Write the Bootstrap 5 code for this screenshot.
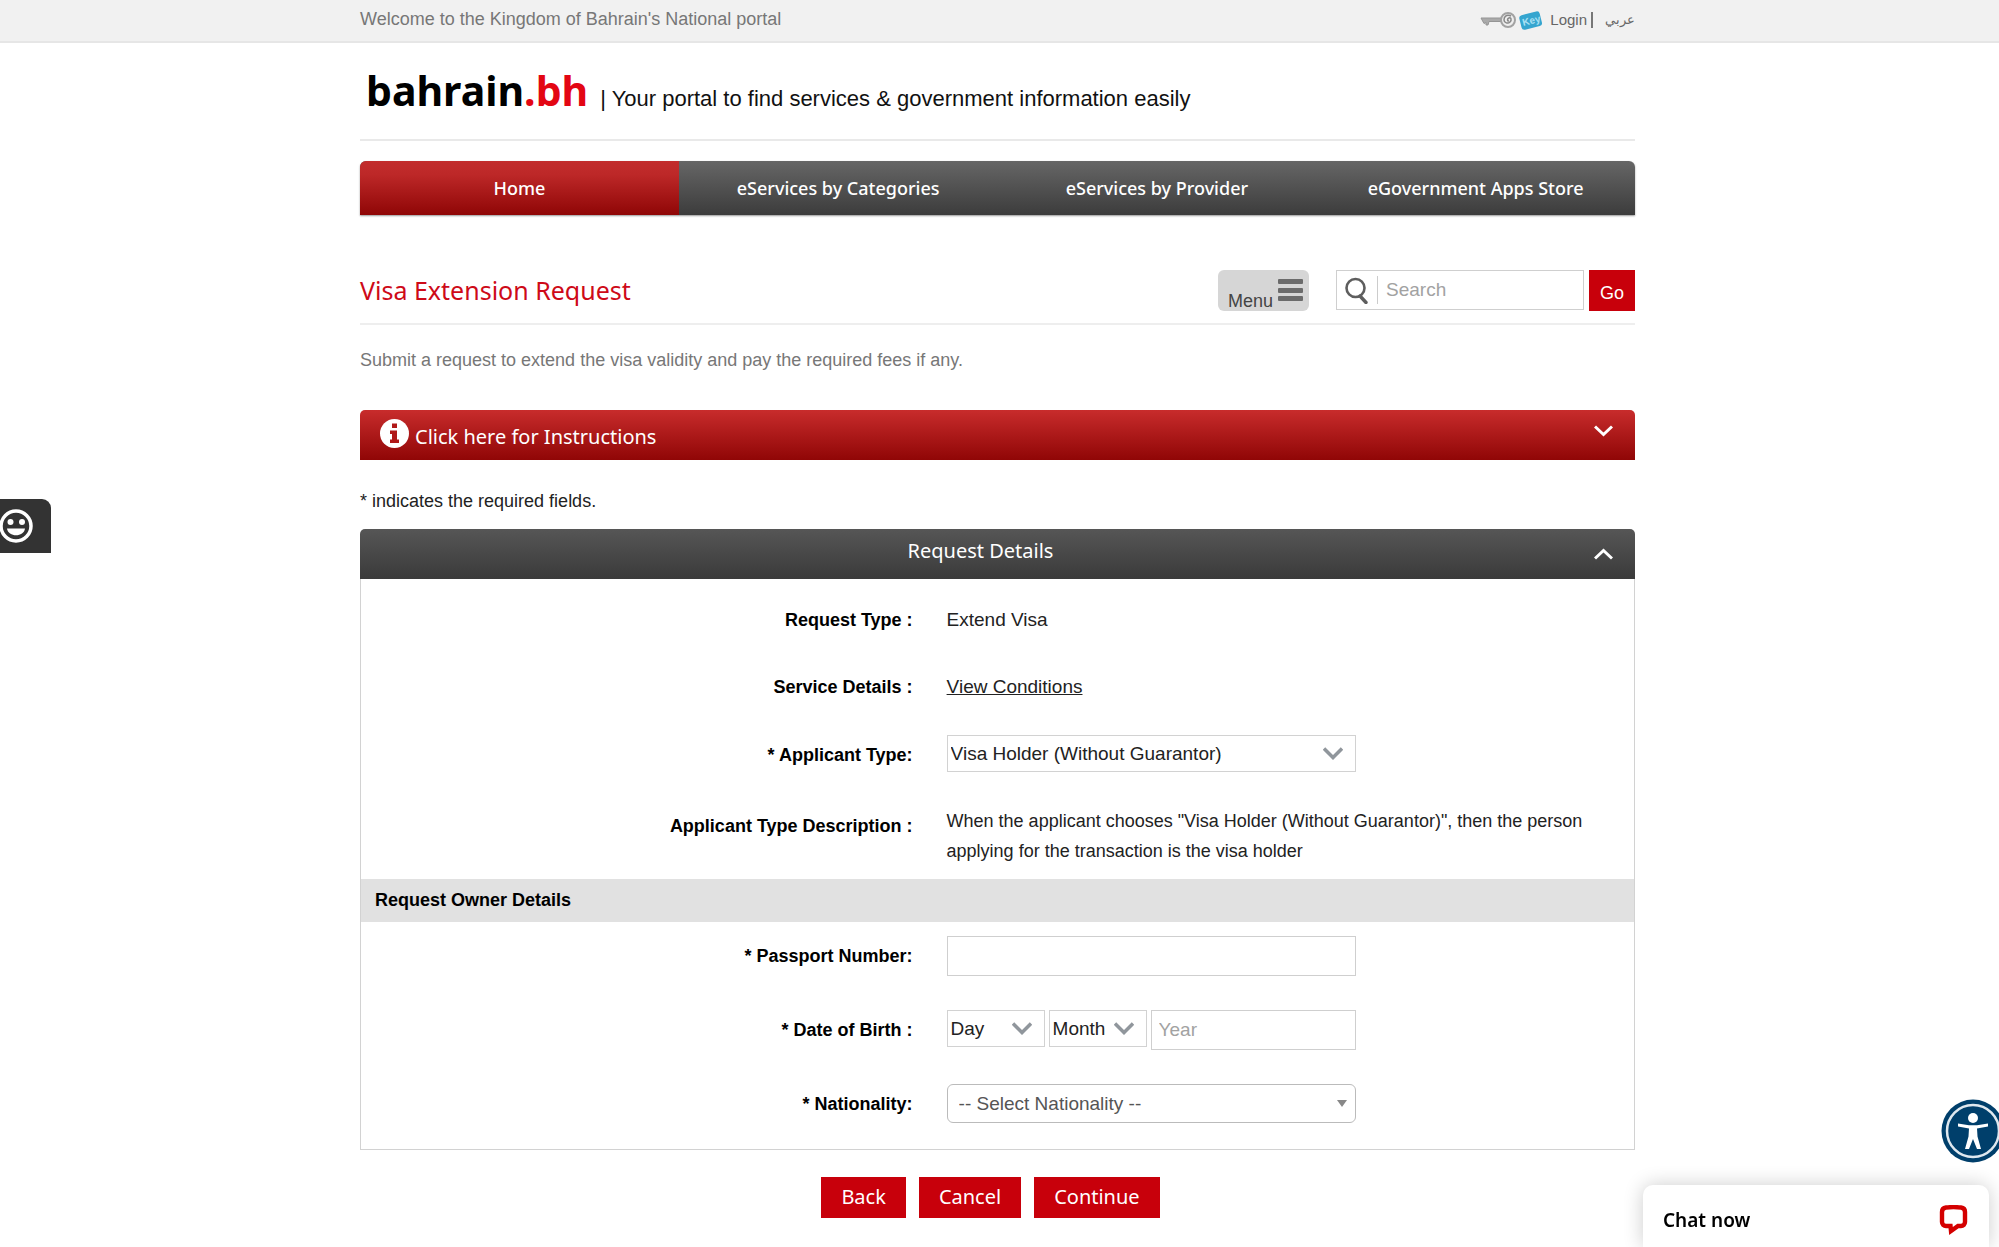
<!DOCTYPE html>
<html lang="en">
<head>
<meta charset="utf-8">
<meta name="viewport" content="width=device-width, initial-scale=1">
<title>Visa Extension Request - bahrain.bh</title>
<link href="https://cdn.jsdelivr.net/npm/bootstrap@5.3.0/dist/css/bootstrap.min.css" rel="stylesheet">
<style>
  body { font-family: "Liberation Sans", Arial, sans-serif; font-size: 18px; line-height: 30px; color: #222; background: #fff; overflow-x: hidden; }
  a { color: inherit; }
  .page-wrap { width: 100%; max-width: 1279px; margin: 0 auto; padding-right: 4px; }
  .head-font { font-family: "Noto Sans", "Open Sans", sans-serif; }
  .topbar { background: #f1f1f1; border-bottom: 2px solid #e6e6e6; height: 43px; color: #777; }
  .topbar .page-wrap { height: 38px; }
  .topbar-links { font-size: 15px; color: #666; padding-top: 2px; }
  .topbar-links [lang="ar"] { font-size: 13px; }
  .bar-sep { width: 2px; height: 16px; background: #777; margin: 0 12px 0 4px; }
  .masthead { height: 98px; padding-left: 6px; padding-top: 20px; border-bottom: 2px solid #e9e9e9; }
  .brand { font-size: 41px; font-weight: 700; line-height: 54px; color: #000; }
  .brand span { color: #e30613; }
  .tagline { font-size: 22px; color: #111; margin-left: 12px; }
  .main-nav { margin-top: 20px; height: 54px; border-radius: 6px 6px 0 0; overflow: hidden; background: linear-gradient(#666, #3c3c3c); box-shadow: 0 1px 2px #999; }
  .main-nav .nav-link { color: #fff; font-size: 18px; font-weight: 500; line-height: 54px; padding: 0; }
  .main-nav .nav-link.active { background: linear-gradient(#c22c2c, #bd2828 25%, #8f0606); }
  .title-row { margin-top: 55px; height: 55px; border-bottom: 2px solid #eee; }
  .title-row h1 { font-size: 25px; line-height: 40px; color: #ce0a18; font-weight: 400; }
  .menu-btn { width: 91px; height: 41px; border: 0; border-radius: 6px; background: #d6d6d6; color: #444; padding: 0 6px 0 10px; line-height: 20px; margin-right: 27px; }
  .menu-btn .menu-word { padding-top: 20px; }
  .search-box { width: 248px; height: 40px; border: 1px solid #cfcfcf; margin-right: 5px; padding-left: 8px; }
  .search-sep { width: 1px; height: 28px; background: #ccc; margin: 0 8px 0 9px; }
  .search-box input { border: 0; outline: 0; width: 100%; min-width: 0; font-size: 19px; padding: 0; background: transparent; }
  input::placeholder { color: #a2a2a2; opacity: 1; }
  .red-btn { background: #c8000b; color: #fff; border: 0; border-radius: 0; height: 41px; }
  .go-btn { width: 46px; padding: 5px 0 0; font-size: 18px; }
  .intro { color: #777; margin: 20px 0 35px; line-height: 30px; }
  .instructions { width: 100%; height: 50px; border: 0; border-radius: 5px 5px 0 0; background: linear-gradient(#c82c2c, #900606); color: #fff; padding: 0 22px 0 20px; font-size: 20px; margin-bottom: 26px; }
  .instructions .label-text { padding-top: 4px; margin-left: 6px; }
  .instructions .chev { margin-bottom: 9px; margin-left: auto; }
  .required-note { margin-bottom: 13px; }
  .panel-head { width: 100%; height: 50px; border: 0; border-radius: 5px 5px 0 0; background: linear-gradient(#565656, #3a3a3a); color: #fff; font-size: 20px; padding: 0 22px 0 0; }
  .panel-head .head-text { padding: 0 0 7px 7px; }
  .panel-body { border: 1px solid #d2d2d2; border-top: 0; padding-top: 26px; padding-bottom: 26px; margin-bottom: 27px; }
  .form-line { display: flex; align-items: flex-start; color: #222; }
  .form-line > .lab { width: 46%; padding-right: 34px; text-align: right; font-weight: 700; color: #000; }
  .form-line > .val { flex: 1; min-width: 0; }
  .field-line > .lab { padding-top: 5px; }
  .line-a { margin-bottom: 37px; }
  .line-b { margin-bottom: 33px; }
  .line-c { margin-bottom: 34px; }
  .line-d { margin-bottom: 13px; }
  .mid-text { font-size: 19px; }
  .strip { background: #e1e1e1; height: 43px; line-height: 42px; padding-left: 14px; font-size: 18px; font-weight: 700; color: #000; margin: 0 0 14px; }
  .plain-select { appearance: none; border: 1px solid #d2d2d2; border-radius: 0; height: 37px; font-size: 19px; line-height: 30px; padding: 0 0 0 3px; color: #222; background: transparent; width: 100%; }
  .pick { position: relative; }
  .pick svg { position: absolute; right: 13px; top: 12px; pointer-events: none; }
  .w-field { width: 409px; max-width: 100%; }
  .w-part { width: 98px; }
  .text-field { border: 1px solid #cfcfcf; height: 40px; font-size: 19px; padding: 0 7px; width: 100%; min-width: 0; outline: 0; color: #222; }
  .round-select { border: 1px solid #bbb; border-radius: 6px; height: 39px; padding-left: 11px; color: #555; }
  .pick .caret { right: 9px; top: 16px; }
  .actions { gap: 13px; padding-right: 14px; }
  .action-btn { font-size: 20px; padding: 0 20px 1px; }
  .feedback { position: fixed; left: 0; top: 499px; width: 51px; height: 54px; background: #333; border: 0; border-radius: 0 9px 0 0; padding: 0; text-align: left; }
  .access { position: fixed; right: -6px; bottom: 84px; width: 64px; height: 64px; border: 0; padding: 0; background: none; }
  .chat { position: fixed; right: 10px; bottom: 0; width: 346px; height: 62px; border: 0; border-radius: 10px 10px 0 0; background: #fff; box-shadow: 0 0 20px rgba(0,0,0,.2); padding: 7px 21px 0 20px; font-size: 19px; font-weight: 600; color: #000; }
</style>
</head>
<body>
<div class="topbar">
  <div class="page-wrap d-flex justify-content-between align-items-center">
    <span>Welcome to the Kingdom of Bahrain's National portal</span>
    <div class="topbar-links d-flex align-items-center">
      <svg class="me-2" width="62" height="26" viewBox="0 0 62 26" aria-hidden="true">
        <path d="M1 11H21V14.500H9L8 18H6V15.500L4 16.500Z" fill="#aaa" stroke="#959595"/>
        <circle cx="28" cy="13" r="7" fill="#eee" stroke="#a2a2a2" stroke-width="2"/>
        <path d="M31 9c-5-2-7 1-7 4s4 4 6 2 1-5-1-4-2 3 0 3" fill="none" stroke="#888" stroke-width="1.500"/>
        <g transform="rotate(-14 51 13)"><rect x="40" y="6" width="21" height="15" rx="3" fill="#35a5cf"/>
        <text x="42" y="17" font-family="Liberation Sans, sans-serif" font-size="10" font-weight="700" fill="#a8e0f3">Key</text></g>
      </svg>
      <a href="#" class="text-decoration-none">Login</a>
      <span class="bar-sep"></span>
      <a href="#" class="text-decoration-none" lang="ar">عربي</a>
    </div>
  </div>
</div>

<div class="page-wrap">
  <header class="masthead d-flex align-items-start">
    <div class="d-flex align-items-baseline">
      <a href="#" class="brand head-font text-decoration-none">bahrain<span>.bh</span></a>
      <span class="tagline">| Your portal to find services &amp; government information easily</span>
    </div>
  </header>

  <nav class="main-nav nav nav-justified head-font flex-nowrap">
    <a class="nav-item nav-link active w-25" href="#">Home</a>
    <a class="nav-item nav-link w-25" href="#">eServices by Categories</a>
    <a class="nav-item nav-link w-25" href="#">eServices by Provider</a>
    <a class="nav-item nav-link w-25" href="#">eGovernment Apps Store</a>
  </nav>

  <div class="title-row d-flex align-items-start">
    <h1 class="head-font m-0 me-auto">Visa Extension Request</h1>
    <button type="button" class="menu-btn d-flex align-items-center justify-content-between"><span class="menu-word">Menu</span>
      <svg width="25" height="23" viewBox="0 0 25 23" fill="#6b6b6b"><rect width="25" height="5" y="0" rx="1"/><rect width="25" height="5" y="9" rx="1"/><rect width="25" height="5" y="17" rx="1"/></svg>
    </button>
    <form class="d-flex">
      <div class="search-box d-flex align-items-center">
        <svg class="flex-shrink-0" width="23" height="27" viewBox="0 0 23 27" fill="none" stroke="#5e5e5e" stroke-width="2.6"><circle cx="10.5" cy="11" r="9"/><path d="M15 19l6 6.500" stroke-width="3.400" stroke-linecap="round"/></svg>
        <span class="search-sep flex-shrink-0"></span>
        <input type="search" placeholder="Search" aria-label="Search">
      </div>
      <button type="button" class="red-btn go-btn">Go</button>
    </form>
  </div>

  <p class="intro">Submit a request to extend the visa validity and pay the required fees if any.</p>

  <button type="button" class="instructions head-font d-flex align-items-center">
    <svg class="mb-1" width="29" height="29" viewBox="0 0 29 29"><circle cx="14.500" cy="14.500" r="14.500" fill="#fff"/><path d="M12 4.500h5v4.500h-5zM10 11.500h7v9h2v3.500h-9v-3.500h2v-5.500h-2z" fill="#b01818"/></svg>
    <span class="label-text">Click here for Instructions</span>
    <svg class="chev" width="19" height="12" viewBox="0 0 19 12" fill="none" stroke="#fff" stroke-width="3"><path d="M1 1.500l8.500 8 8.500-8"/></svg>
  </button>

  <p class="required-note">* indicates the required fields.</p>

  <form>
    <button type="button" class="panel-head head-font d-flex align-items-center">
      <span class="head-text flex-grow-1 text-center">Request Details</span>
      <svg width="19" height="12" viewBox="0 0 19 12" fill="none" stroke="#fff" stroke-width="3"><path d="M1 10.500l8.500-8 8.500 8"/></svg>
    </button>
    <div class="panel-body">
      <div class="form-line line-a">
        <span class="lab">Request Type :</span><span class="val mid-text">Extend Visa</span>
      </div>
      <div class="form-line line-b">
        <span class="lab">Service Details :</span><span class="val mid-text"><a href="#">View Conditions</a></span>
      </div>
      <div class="form-line field-line line-c">
        <label class="lab" for="applicant">* Applicant Type:</label>
        <div class="val"><div class="pick w-field">
          <select id="applicant" class="plain-select"><option>Visa Holder (Without Guarantor)</option></select>
          <svg width="20" height="13" viewBox="0 0 20 13" fill="none" stroke="#90969c" stroke-width="3.500"><path d="M1 1.500l9 9 9-9"/></svg>
        </div></div>
      </div>
      <div class="form-line field-line line-d">
        <span class="lab">Applicant Type Description :</span>
        <span class="val pe-5">When the applicant chooses "Visa Holder (Without Guarantor)", then the person applying for the transaction is the visa holder</span>
      </div>
      <h2 class="strip">Request Owner Details</h2>
      <div class="form-line field-line line-c">
        <label class="lab" for="passport">* Passport Number:</label>
        <div class="val"><div class="w-field d-flex"><input id="passport" type="text" class="text-field"></div></div>
      </div>
      <div class="form-line field-line line-c">
        <label class="lab" for="day">* Date of Birth :</label>
        <div class="val"><div class="w-field d-flex gap-1">
          <div class="pick w-part flex-shrink-0">
            <select id="day" class="plain-select"><option>Day</option></select>
            <svg width="20" height="13" viewBox="0 0 20 13" fill="none" stroke="#90969c" stroke-width="3.500"><path d="M1 1.500l9 9 9-9"/></svg>
          </div>
          <div class="pick w-part flex-shrink-0">
            <select class="plain-select" aria-label="Month"><option>Month</option></select>
            <svg width="20" height="13" viewBox="0 0 20 13" fill="none" stroke="#90969c" stroke-width="3.500"><path d="M1 1.500l9 9 9-9"/></svg>
          </div>
          <input type="text" class="text-field" placeholder="Year" aria-label="Year">
        </div></div>
      </div>
      <div class="form-line field-line">
        <label class="lab" for="nation">* Nationality:</label>
        <div class="val"><div class="pick w-field">
          <select id="nation" class="plain-select round-select"><option>-- Select Nationality --</option></select>
          <svg class="caret" width="10" height="7" viewBox="0 0 10 7"><path d="M0 0h10L5 7z" fill="#888"/></svg>
        </div></div>
      </div>
    </div>
    <div class="actions d-flex justify-content-center head-font">
      <button type="button" class="red-btn action-btn">Back</button>
      <button type="button" class="red-btn action-btn">Cancel</button>
      <button type="button" class="red-btn action-btn">Continue</button>
    </div>
  </form>
</div>

<button type="button" class="feedback" aria-label="Feedback">
  <svg width="34" height="34" viewBox="0 0 34 34"><circle cx="16" cy="17" r="15" fill="none" stroke="#fff" stroke-width="3.500"/><circle cx="10.500" cy="13" r="3" fill="#fff"/><circle cx="22" cy="13" r="3" fill="#fff"/><path d="M7 19.500h18c-1 9-17 9-18 0z" fill="#fff"/></svg>
</button>
<button type="button" class="access d-flex" aria-label="Accessibility">
  <svg width="64" height="64" viewBox="0 0 64 64"><circle cx="32" cy="32" r="31.500" fill="#003f6b"/><circle cx="32" cy="32" r="26" fill="none" stroke="#dfe8ef" stroke-width="2.500"/><circle cx="32" cy="19" r="5" fill="#fff"/><path d="M17 24.500l11 1.800h8l11-1.800v3l-11 2 .5 8L40 50h-4l-4-10-4 10h-4l3.500-12.500.5-8-11-2z" fill="#fff"/></svg>
</button>
<button type="button" class="chat head-font d-flex align-items-center justify-content-between">Chat now
  <svg width="29" height="30" viewBox="0 0 29 30"><path d="M11.500 21H7a4 4 0 0 1-4-4V7q0-4 4-4.500 7.500-.8 15 0 4 .5 4 4.500v10a4 4 0 0 1-4 4h-3l-7 5z" fill="none" stroke="#d40000" stroke-width="4.400"/></svg>
</button>
<script src="https://cdn.jsdelivr.net/npm/bootstrap@5.3.0/dist/js/bootstrap.bundle.min.js"></script>
</body>
</html>
